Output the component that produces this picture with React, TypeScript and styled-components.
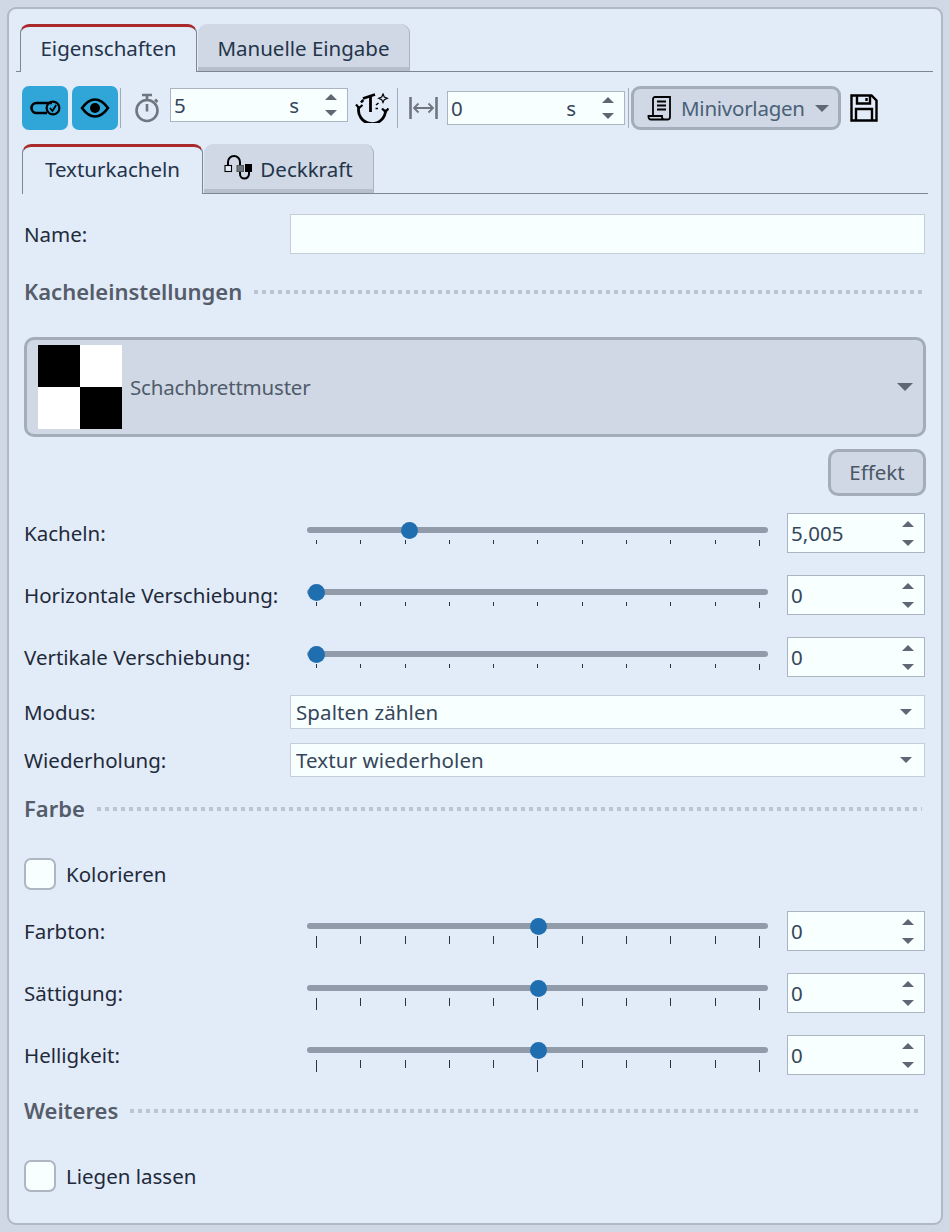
import React from 'react';
import styled, { createGlobalStyle } from 'styled-components';

const GlobalStyle = createGlobalStyle`
  html, body {
    margin: 0;
    padding: 0;
    background: #cfd8e4;
  }
  body {
    font-family: "Noto Sans", "Open Sans", "Liberation Sans", sans-serif;
    font-size: 20.5px;
    color: #1f2a3a;
  }
`;

const Panel = styled.div`
  box-sizing: border-box;
  margin: 7px;
  width: 936px;
  height: 1218px;
  padding: 15px 8px 0 7px;
  background: #e2ebf8;
  border: 2px solid #b0b8c4;
  border-radius: 9px;
`;

const TabStrip = styled.div<{ $inset?: number; $height: number }>`
  display: flex;
  align-items: stretch;
  box-sizing: border-box;
  height: ${p => p.$height}px;
  margin-left: ${p => p.$inset || 0}px;
  margin-right: ${p => (p.$inset ? 5 : 0)}px;
  margin-top: ${p => (p.$inset ? 14 : 0)}px;
  padding-left: ${p => (p.$inset ? 0 : 4)}px;
  border-bottom: 1px solid #7d8794;
`;

const Tab = styled.div<{ $active?: boolean; $width: number }>`
  display: flex;
  align-items: center;
  justify-content: center;
  gap: 8px;
  box-sizing: border-box;
  width: ${p => p.$width}px;
  margin-bottom: ${p => (p.$active ? -1 : 0)}px;
  margin-left: ${p => (p.$active ? 0 : 1)}px;
  border-radius: 9px 9px 0 0;
  color: #24344a;
  ${p =>
    p.$active
      ? `
    padding-bottom: 3px;
    background: #e2ebf8;
    border-top: 3px solid #a92a2a;
    border-left: 1px solid #7d8794;
    border-right: 1px solid #7d8794;
  `
      : `
    padding-top: 5px;
    background: #cfd8e4;
    border-bottom: 4px solid #b6bfcb;
    border-right: 1px solid #aab3bf;
  `}
`;

const Toolbar = styled.div`
  display: flex;
  align-items: flex-start;
  height: 44px;
  margin-top: 14px;
  padding-left: 6px;
`;

const ToggleButton = styled.div<{ $gap?: number }>`
  display: flex;
  align-items: center;
  justify-content: center;
  width: 46px;
  height: 44px;
  margin-left: ${p => p.$gap || 0}px;
  background: #2fa5d8;
  border-radius: 7px;
`;

const Separator = styled.div<{ $gap: number }>`
  width: 1px;
  height: 40px;
  margin: 2px 0 0 ${p => p.$gap}px;
  background: #a3adb9;
`;

const ToolIcon = styled.svg<{ $gap: number; $top: number }>`
  flex: none;
  margin: ${p => p.$top}px 0 0 ${p => p.$gap}px;
`;

const SpinBox = styled.div<{ $width: number; $top?: number; $gap?: number }>`
  display: flex;
  align-items: center;
  box-sizing: border-box;
  width: ${p => p.$width}px;
  margin-top: ${p => p.$top || 0}px;
  margin-left: ${p => p.$gap || 0}px;
  padding: 0 10px 0 3px;
  background: #f7ffff;
  border: 1px solid #aab4c2;
  color: #36465a;
`;

const TimeBox = styled(SpinBox)`
  height: 34px;
`;

const ValueBox = styled(SpinBox)`
  height: 40px;
`;

const SpinValue = styled.span`
  flex: 1;
`;

const SpinUnit = styled.span`
  margin-right: 26px;
`;

const SpinArrows = styled.div<{ $gap: number }>`
  display: flex;
  flex-direction: column;
  gap: ${p => p.$gap}px;
`;

const Triangle = styled.div<{ $up?: boolean; $size?: number }>`
  width: 0;
  height: 0;
  border-left: ${p => p.$size || 6}px solid transparent;
  border-right: ${p => p.$size || 6}px solid transparent;
  ${p => (p.$up ? 'border-bottom' : 'border-top')}: ${p => p.$size || 6}px solid #5d6874;
`;

const TemplateButton = styled.div`
  display: flex;
  align-items: center;
  box-sizing: border-box;
  width: 210px;
  height: 44px;
  margin-left: 2px;
  padding-left: 13px;
  background: #cfd8e4;
  border: 3px solid #a3adb9;
  border-radius: 9px;
  color: #4a6078;
  letter-spacing: -0.25px;
`;

const TemplateLabel = styled.span`
  margin: 0 10px 0 8px;
`;

const Form = styled.div`
  padding: 0 8px;
`;

const Row = styled.div<{ $top?: number; $height: number }>`
  display: grid;
  grid-template-columns: 266px 1fr;
  align-items: center;
  height: ${p => p.$height}px;
  margin-top: ${p => p.$top || 0}px;
`;

const TextField = styled.div`
  box-sizing: border-box;
  height: 40px;
  background: #f7ffff;
  border: 1px solid #c5cdd8;
`;

const Heading = styled.div<{ $top: number }>`
  display: flex;
  align-items: center;
  gap: 12px;
  height: 28px;
  margin-top: ${p => p.$top}px;
  padding-right: 3px;
  color: #555d6a;
  font-size: 22px;
  font-weight: 600;
`;

const DottedRule = styled.div`
  flex: 1;
  height: 4px;
  margin-top: 2px;
  background: repeating-linear-gradient(to right, #bcc4cf 0 4px, transparent 4px 8px);
`;

const PatternPicker = styled.div`
  display: flex;
  align-items: center;
  box-sizing: border-box;
  width: 902px;
  height: 100px;
  margin-top: 32px;
  padding: 0 10px 0 11px;
  background: #cfd8e4;
  border: 3px solid #a3adb9;
  border-radius: 10px;
  color: #4f5b6b;
  letter-spacing: -0.2px;
`;

const Checker = styled.div`
  display: grid;
  grid-template-columns: 42px 42px;
  grid-template-rows: 42px 42px;
  margin-right: 8px;
`;

const CheckerCell = styled.div<{ $dark?: boolean }>`
  background: ${p => (p.$dark ? '#000' : '#fff')};
`;

const PatternName = styled.span`
  flex: 1;
`;

const EffectRow = styled.div`
  display: flex;
  justify-content: flex-end;
  margin: 12px -1px 0 0;
`;

const EffectButton = styled.div`
  display: flex;
  align-items: center;
  justify-content: center;
  box-sizing: border-box;
  width: 98px;
  height: 47px;
  padding-bottom: 2px;
  background: #cfd8e4;
  border: 3px solid #a3adb9;
  border-radius: 10px;
  color: #4a5666;
`;

const SliderRow = styled.div<{ $top: number }>`
  display: grid;
  grid-template-columns: 283px 480px 138px;
  align-items: center;
  height: 40px;
  margin-top: ${p => p.$top}px;
`;

const SliderLabel = styled.span`
  white-space: nowrap;
`;

const SliderArea = styled.div<{ $top: number }>`
  position: relative;
  box-sizing: border-box;
  width: 461px;
  height: 40px;
  padding-top: ${p => p.$top}px;
`;

const Track = styled.div`
  height: 6px;
  background: #929baa;
  border-radius: 3px;
`;

const Thumb = styled.div`
  position: absolute;
  width: 17px;
  height: 17px;
  margin-left: -8px;
  border-radius: 50%;
  background: #1f6fb0;
`;

const Ticks = styled.div`
  display: flex;
  justify-content: space-between;
  width: 444px;
  height: 12px;
  margin: 7px 0 0 9px;
`;

const Tick = styled.div<{ $size: number }>`
  width: 1px;
  height: ${p => p.$size}px;
  background: #2b3340;
`;

const SelectBox = styled.div`
  display: flex;
  align-items: center;
  justify-content: space-between;
  box-sizing: border-box;
  height: 34px;
  padding: 0 12px 0 5px;
  background: #f7ffff;
  border: 1px solid #c5cdd8;
  color: #36465a;
  letter-spacing: 0.1px;
`;

const CheckRow = styled.div<{ $top: number }>`
  display: flex;
  align-items: center;
  gap: 10px;
  height: 32px;
  margin-top: ${p => p.$top}px;
`;

const CheckBox = styled.div`
  box-sizing: border-box;
  width: 32px;
  height: 32px;
  background: #f7ffff;
  border: 2px solid #aeb6c2;
  border-radius: 7px;
`;

const Spinner = ({ gap }: { gap: number }) => (
  <SpinArrows $gap={gap}>
    <Triangle $up />
    <Triangle />
  </SpinArrows>
);

type SliderProps = {
  label: string;
  value: string;
  percent: number;
  top: number;
  gap: number;
  tall?: boolean;
};

const Slider = ({ label, value, percent, top, gap, tall }: SliderProps) => (
  <SliderRow $top={gap}>
    <SliderLabel>{label}</SliderLabel>
    <SliderArea $top={top}>
      <Track />
      {/* thumb runs over the tick span, not the whole track */}
      <Thumb style={{ left: `${9 + percent * 4.43}px`, top: `${top - 5}px` }} />
      <Ticks>
        {Array.from({ length: 11 }).map((_, i) => {
          const edge = i === 0 || i === 10;
          const size = tall ? (edge || i === 5 ? 12 : 8) : i === 10 ? 6 : 4;
          return <Tick key={i} $size={size} />;
        })}
      </Ticks>
    </SliderArea>
    <ValueBox $width={138}>
      <SpinValue>{value}</SpinValue>
      <Spinner gap={13} />
    </ValueBox>
  </SliderRow>
);

export default function App() {
  return (
    <>
      <GlobalStyle />
      <Panel>
        <TabStrip $height={48}>
          <Tab $active $width={177}>Eigenschaften</Tab>
          <Tab $width={212}>Manuelle Eingabe</Tab>
        </TabStrip>

        <Toolbar>
          <ToggleButton>
            <svg width="46" height="44" viewBox="0 0 46 44" fill="none" stroke="#000">
              <path d="M30 17H14.5a5 5 0 0 0 0 10H25" strokeWidth="2.6" />
              <circle cx="31" cy="22" r="6.4" strokeWidth="2.2" />
              <path d="M28 22l2.4 3 3.8-6" strokeWidth="1.8" />
            </svg>
          </ToggleButton>
          <ToggleButton $gap={4}>
            <svg width="46" height="44" viewBox="0 0 46 44" fill="none" stroke="#000">
              <path d="M10 22c4-5.500 8-8.500 13-8.500s9 3 13 8.500c-4 5.500-8 8.500-13 8.500s-9-3-13-8.500z" strokeWidth="2.6" />
              <circle cx="23" cy="22" r="5" fill="#000" stroke="none" />
            </svg>
          </ToggleButton>
          <Separator $gap={2} />
          <ToolIcon $gap={13} $top={7} width="26" height="30" viewBox="0 0 26 30" fill="none" stroke="#6f7680" strokeWidth="2.600">
            <circle cx="13" cy="17.500" r="10.500" />
            <path d="M8 2h10M13 2v5M13 11v7.500" />
            <path d="M21 6.500l2.500 2.500" />
          </ToolIcon>
          <TimeBox $width={178} $top={2} $gap={10}>
            <SpinValue>5</SpinValue>
            <SpinUnit>s</SpinUnit>
            <Spinner gap={10} />
          </TimeBox>
          <ToolIcon $gap={7} $top={7} width="34" height="30" viewBox="0 0 34 30" fill="none" stroke="#000" strokeWidth="2.800">
            <path d="M4 13.500a13.500 13.500 0 1 0 26.500 3" />
            <path d="M6 9.500a13 13 0 0 1 2.500-2.500" strokeWidth="2.400" />
            <path d="M1 11.500l3 3.500 3.500-3M27 15.500l3.500 3.500 3-3.500" strokeWidth="2.200" />
            <path d="M8 5.500l12-4M15.500 4v15" />
            <path d="M28 1l1.300 3 3 1.300-3 1.300-1.300 3-1.300-3-3-1.300 3-1.300z" strokeWidth="1.200" />
            <path d="M21 12l2.500-2M20.500 15.500h2.500" strokeWidth="1.600" />
          </ToolIcon>
          <Separator $gap={8} />
          <ToolIcon $gap={11} $top={10} width="30" height="24" viewBox="0 0 30 24" fill="none" stroke="#6f7680">
            <path d="M1.500 1v22M27.500 1v22" strokeWidth="2.600" />
            <path d="M5 12h19M9.500 7.500L5 12l4.500 4.500M19.500 7.500L24 12l-4.500 4.500" strokeWidth="1.800" />
          </ToolIcon>
          <TimeBox $width={178} $top={5} $gap={8}>
            <SpinValue>0</SpinValue>
            <SpinUnit>s</SpinUnit>
            <Spinner gap={10} />
          </TimeBox>
          <Separator $gap={3} />
          <TemplateButton>
            <svg width="26" height="26" viewBox="0 0 26 26" fill="none" stroke="#000" strokeWidth="1.800">
              <path d="M6 21V4a2 2 0 0 1 2-2h15v20a2.500 2.500 0 0 1-2.500 2.500H4a2.500 2.500 0 0 1-2.500-2.500v-1H15v1a2.500 2.500 0 0 0 2.500 2.500" />
              <path d="M10 6.500h9M10 10.500h9M10 14.500h9" strokeWidth="2" />
            </svg>
            <TemplateLabel>Minivorlagen</TemplateLabel>
            <Triangle $size={7} />
          </TemplateButton>
          <ToolIcon $gap={9} $top={8} width="28" height="28" viewBox="0 0 28 28" fill="none" stroke="#000" strokeWidth="2.400">
            <path d="M1.500 1.500h20l5 5v20h-25z" />
            <path d="M7 1.500v8h13v-8M6 26.500V15h16v11.500" />
            <path d="M16.500 4v3" />
          </ToolIcon>
        </Toolbar>

        <TabStrip $inset={6} $height={50}>
          <Tab $active $width={181}>Texturkacheln</Tab>
          <Tab $width={170}>
            <svg width="28" height="28" viewBox="0 0 28 28" fill="none" stroke="#000" strokeWidth="2">
              <path d="M4 11V7a6 6 0 0 1 12 0v12a4.500 4.500 0 0 0 9 0v-5" />
              <rect x="1" y="10.500" width="6.500" height="6" fill="#e2ebf8" strokeWidth="1.100" />
              <rect x="13" y="10.500" width="6.500" height="6" fill="#6f7680" stroke="#555" strokeWidth="1" />
              <rect x="21" y="9" width="7" height="8" fill="#000" stroke="none" />
            </svg>
            <span>Deckkraft</span>
          </Tab>
        </TabStrip>

        <Form>
          <Row $top={20} $height={40}>
            <span>Name:</span>
            <TextField />
          </Row>

          <Heading $top={23}>
            <span>Kacheleinstellungen</span>
            <DottedRule />
          </Heading>

          <PatternPicker>
            <Checker>
              <CheckerCell $dark />
              <CheckerCell />
              <CheckerCell />
              <CheckerCell $dark />
            </Checker>
            <PatternName>Schachbrettmuster</PatternName>
            <Triangle $size={8} />
          </PatternPicker>

          <EffectRow>
            <EffectButton>Effekt</EffectButton>
          </EffectRow>

          <Slider gap={17} top={14} label="Kacheln:" value="5,005" percent={21} />
          <Slider gap={22} top={14} label="Horizontale Verschiebung:" value="0" percent={0} />
          <Slider gap={22} top={14} label="Vertikale Verschiebung:" value="0" percent={0} />

          <Row $top={18} $height={34}>
            <span>Modus:</span>
            <SelectBox>
              Spalten zählen
              <Triangle />
            </SelectBox>
          </Row>
          <Row $top={14} $height={34}>
            <span>Wiederholung:</span>
            <SelectBox>
              Textur wiederholen
              <Triangle />
            </SelectBox>
          </Row>

          <Heading $top={17}>
            <span>Farbe</span>
            <DottedRule />
          </Heading>

          <CheckRow $top={36}>
            <CheckBox />
            Kolorieren
          </CheckRow>

          <Slider gap={21} top={12} tall label="Farbton:" value="0" percent={50} />
          <Slider gap={22} top={12} tall label="Sättigung:" value="0" percent={50} />
          <Slider gap={22} top={12} tall label="Helligkeit:" value="0" percent={50} />

          <Heading $top={21}>
            <span>Weiteres</span>
            <DottedRule />
          </Heading>

          <CheckRow $top={36}>
            <CheckBox />
            Liegen lassen
          </CheckRow>
        </Form>
      </Panel>
    </>
  );
}
